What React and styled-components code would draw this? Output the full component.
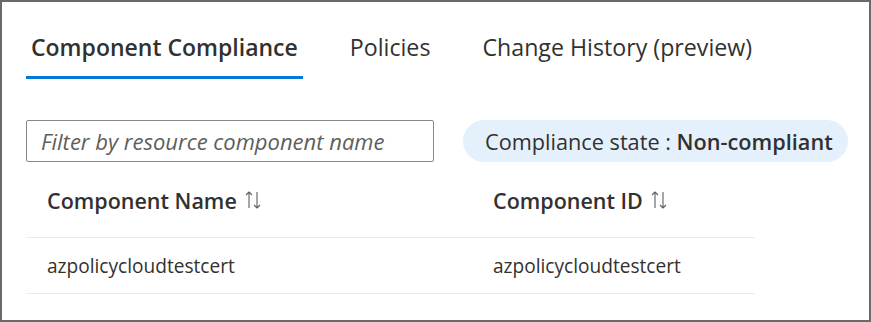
import React from 'react';
import styled, { createGlobalStyle } from 'styled-components';

const Global = createGlobalStyle`
	body {
		margin: 0;
		font-family: "Segoe UI", "Open Sans", "Noto Sans", sans-serif;
		color: #323130;
		background: #fff;
	}
	* { box-sizing: border-box; }
`;

const Frame = styled.div`
	width: 871px;
	height: 322px;
	border: 2px solid #6a6a6a;
	padding: 0 24px;
	display: flex;
	flex-direction: column;
`;

const TabBar = styled.div`
	display: flex;
	gap: 42px;
	padding-top: 30px;
`;

const Tab = styled.div`
	padding: 0 5px;
	height: 47px;
	font-size: ${(p) => (p.$active ? '23px' : '23.2px')};
	line-height: 31px;
	font-weight: ${(p) => (p.$active ? 600 : 400)};
	color: #323130;
	white-space: nowrap;
	border-bottom: 3px solid ${(p) => (p.$active ? '#0078d4' : 'transparent')};
`;

const Toolbar = styled.div`
	display: flex;
	align-items: center;
	gap: 29px;
	margin-top: 41px;
`;

const Filter = styled.input`
	flex: 0 0 408px;
	width: 408px;
	height: 42px;
	border: 1px solid #8a8886;
	border-radius: 2px;
	padding: 0 14px;
	font-family: inherit;
	font-size: 22px;
	color: #323130;
	outline: none;
	&::placeholder {
		color: #605e5c;
		font-style: italic;
	}
`;

const Pill = styled.div`
	flex: 0 0 auto;
	height: 42px;
	padding: 0 15px 0 22px;
	border-radius: 21px;
	background: #e4f0fb;
	display: flex;
	align-items: center;
	font-size: 21.7px;
	white-space: nowrap;
	b {
		font-weight: 600;
	}
`;

const Table = styled.div`
	width: 729px;
	margin-top: 9px;
	display: grid;
	grid-template-columns: 446px 1fr;
`;

const HeadCell = styled.div`
	height: 67px;
	padding: 0 0 8px 21px;
	display: flex;
	align-items: center;
	gap: 7px;
	font-size: 21.5px;
	font-weight: 600;
	border-bottom: 1px solid #edebe9;
`;

const Cell = styled.div`
	height: 56px;
	padding-left: 21px;
	display: flex;
	align-items: center;
	font-size: 19.1px;
	border-bottom: 1px solid #edebe9;
`;

const SortIcon = () => (
	<svg width="18" height="20" viewBox="0 0 18 20" fill="none" stroke="#605e5c" strokeWidth="1.1">
		<path d="M5 18V2M2 5l3-3 3 3" />
		<path d="M13 2v16M10 15l3 3 3-3" />
	</svg>
);

export default function App() {
	return (
		<>
			<Global />
			<Frame>
				<TabBar>
					<Tab $active>Component Compliance</Tab>
					<Tab>Policies</Tab>
					<Tab>Change History (preview)</Tab>
				</TabBar>
				<Toolbar>
					<Filter placeholder="Filter by resource component name" />
					<Pill>
						Compliance state :&nbsp;<b>Non-compliant</b>
					</Pill>
				</Toolbar>
				<Table>
					<HeadCell>
						Component Name<SortIcon />
					</HeadCell>
					<HeadCell>
						Component ID<SortIcon />
					</HeadCell>
					<Cell>azpolicycloudtestcert</Cell>
					<Cell>azpolicycloudtestcert</Cell>
				</Table>
			</Frame>
		</>
	);
}
